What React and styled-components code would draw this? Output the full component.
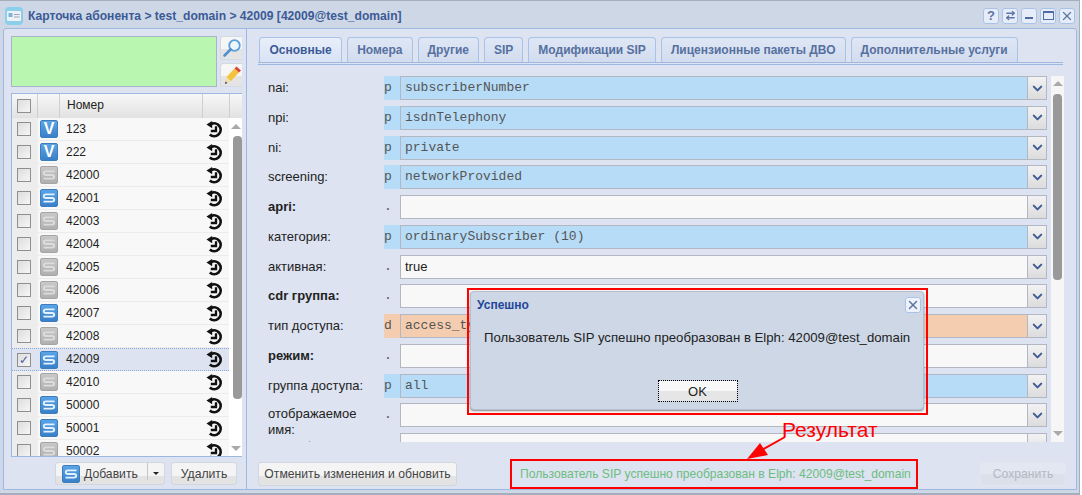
import React from "react";
import styled, { createGlobalStyle } from "styled-components";
import { ChevronDown, X, ArrowRightLeft } from "lucide-react";

const rows = [
  ["123", "V", true],
  ["222", "V", true],
  ["42000", "S", false],
  ["42001", "S", true],
  ["42003", "S", false],
  ["42004", "S", false],
  ["42005", "S", false],
  ["42006", "S", false],
  ["42007", "S", true],
  ["42008", "S", false],
  ["42009", "S", true, true],
  ["42010", "S", false],
  ["50000", "S", true],
  ["50001", "S", true],
  ["50002", "S", false],
];

const tabs = [
  "Основные",
  "Номера",
  "Другие",
  "SIP",
  "Модификации SIP",
  "Лицензионные пакеты ДВО",
  "Дополнительные услуги",
];

const fields = [
  { label: "nai:", mark: "p", value: "subscriberNumber", kind: "blue" },
  { label: "npi:", mark: "p", value: "isdnTelephony", kind: "blue" },
  { label: "ni:", mark: "p", value: "private", kind: "blue" },
  { label: "screening:", mark: "p", value: "networkProvided", kind: "blue" },
  { label: "apri:", mark: ".", value: "", bold: true },
  { label: "категория:", mark: "p", value: "ordinarySubscriber (10)", kind: "blue" },
  { label: "активная:", mark: ".", value: "true", kind: "plain" },
  { label: "cdr группа:", mark: ".", value: "", bold: true },
  { label: "тип доступа:", mark: "d", value: "access_type", kind: "orange" },
  { label: "режим:", mark: ".", value: "", bold: true },
  { label: "группа доступа:", mark: "p", value: "all", kind: "blue" },
  { label: "отображаемое имя:", mark: ".", value: "", top: 3 },
  { label: "support", mark: ".", value: "", top: 5 },
];

const markColors = { blue: "#b6dcf8", orange: "#f4cdb0" };

function RestoreIcon() {
  return (
    <svg width="17" height="17" viewBox="0 0 16 16" fill="none">
      <path d="M4.5 3.2 A6 6 0 1 1 3.6 12.6" stroke="#111" strokeWidth="2.6" />
      <polygon points="0.4,3.4 5.8,0 5.8,6.8" fill="#111" />
      <path d="M4.5 9.4 H9.4 V5" stroke="#111" strokeWidth="2.2" />
    </svg>
  );
}

function SBadge({ color }) {
  return (
    <svg width="14" height="14" viewBox="0 0 14 14" fill="none">
      <path
        d="M12.5 3.4 H4 Q1.8 3.4 1.8 5.2 Q1.8 7 4 7 H10 Q12.2 7 12.2 8.8 Q12.2 10.6 10 10.6 H1.5"
        stroke={color}
        strokeWidth="1.9"
      />
    </svg>
  );
}

function TypeIcon({ letter, active, small }) {
  return (
    <TypeBadge $active={active} $small={small}>
      {letter === "S" ? <SBadge color={active ? "#e4f2ff" : "#dcdcdc"} /> : letter}
    </TypeBadge>
  );
}

export default function App() {
  return (
    <Page>
      <GlobalStyle />
      <Title>
        <CardIcon>
          <svg width="14" height="10" viewBox="0 0 14 10">
            <rect width="14" height="10" rx="1" fill="#eef2f6" />
            <rect x="1.5" y="2" width="4" height="4" fill="#7fb2e0" />
            <rect x="7" y="3" width="5.5" height="1" fill="#9aa5b2" />
            <rect x="7" y="5.5" width="5.5" height="1" fill="#9aa5b2" />
          </svg>
        </CardIcon>
        <TitleText>Карточка абонента &gt; test_domain &gt; 42009 [42009@test_domain]</TitleText>
        <WindowTools>
          <ToolButton>?</ToolButton>
          <ToolButton><ArrowRightLeft size={11} strokeWidth={3} /></ToolButton>
          <ToolButton><MinimizeBar /></ToolButton>
          <ToolButton><MaximizeBox /></ToolButton>
          <ToolButton><X size={14} strokeWidth={2.2} /></ToolButton>
        </WindowTools>
      </Title>
      <Frame>
        <LeftPane>
          <SearchBlock>
            <GreenBox />
            <SideTools>
              <SideButton>
                <svg width="20" height="20" viewBox="0 0 20 20" fill="none">
                  <circle cx="12.5" cy="7.5" r="5.3" fill="#eef6fd" stroke="#5f9fd8" strokeWidth="1.8" />
                  <line x1="8.5" y1="11.5" x2="2.5" y2="17.5" stroke="#4f8fcb" strokeWidth="2.6" strokeLinecap="round" />
                </svg>
              </SideButton>
              <SideButton>
                <svg width="20" height="20" viewBox="0 0 20 20">
                  <polygon points="3,19 4.5,12 9,16" fill="#f3dcae" />
                  <polygon points="4.5,12 12.5,3.5 17,7.5 9,16" fill="#f5c33b" />
                  <polygon points="12.5,3.5 14.5,1.5 19,5.5 17,7.5" fill="#d9443c" />
                  <polygon points="3,19 3.6,16.4 5.4,18" fill="#333" />
                </svg>
              </SideButton>
            </SideTools>
          </SearchBlock>
          <Table>
            <TableHead>
              <CheckCell $head><Check /></CheckCell>
              <IconCell />
              <NumberHead>Номер</NumberHead>
              <HeadEnd />
              <HeadEnd $narrow />
            </TableHead>
            <TableBody>
              <RowList>
                {rows.map(([number, letter, active, selected]) => (
                  <Row key={number} $selected={selected}>
                    <CheckCell $selected={selected}>
                      <Check>{selected && "✓"}</Check>
                    </CheckCell>
                    <TypeIcon letter={letter} active={active} />
                    <RowNumber>{number}</RowNumber>
                    <RestoreIcon />
                  </Row>
                ))}
              </RowList>
              <ListScroll>
                <ArrowUp />
                <ListThumb />
                <ArrowDown />
              </ListScroll>
            </TableBody>
          </Table>
          <LeftActions>
            <AddButton>
              <TypeIcon letter="S" active small />
              Добавить
              <SplitArrow />
            </AddButton>
            <SmallButton>Удалить</SmallButton>
          </LeftActions>
        </LeftPane>
        <RightPane>
          <TabBar>
            {tabs.map((tab, i) => (
              <Tab key={tab} $active={i === 0}>{tab}</Tab>
            ))}
          </TabBar>
          <FormArea>
            <FormRows>
              {fields.map((f) => (
                <FormRow key={f.label}>
                  <Label $bold={f.bold} $top={f.top}>{f.label}</Label>
                  <Mark $kind={f.kind}>{f.mark}</Mark>
                  <Field $kind={f.kind}>{f.value}</Field>
                  <FieldArrow><ChevronDown size={15} strokeWidth={3.2} color="#3f5a94" /></FieldArrow>
                </FormRow>
              ))}
            </FormRows>
            <FormScroll>
              <ArrowUp />
              <FormThumb />
              <ArrowDown />
            </FormScroll>
          </FormArea>
          <RightActions>
            <ResetButton>Отменить изменения и обновить</ResetButton>
            <Status>Пользователь SIP успешно преобразован в Elph: 42009@test_domain</Status>
            <SaveButton>Сохранить</SaveButton>
          </RightActions>
        </RightPane>
      </Frame>
      <DialogOutline>
        <Dialog>
          <DialogHead>
            Успешно
            <DialogClose><X size={14} strokeWidth={2.5} /></DialogClose>
          </DialogHead>
          <DialogText>Пользователь SIP успешно преобразован в Elph: 42009@test_domain</DialogText>
          <OkButton>OK</OkButton>
        </Dialog>
      </DialogOutline>
      <Note>Результат</Note>
      <NoteArrow width="50" height="30" viewBox="0 0 50 30">
        <line x1="39" y1="6" x2="16" y2="19" stroke="#f00" strokeWidth="2" />
        <polygon points="1,28 14,12 22,24" fill="#f00" />
      </NoteArrow>
    </Page>
  );
}

const GlobalStyle = createGlobalStyle`
  html, body {
    margin: 0;
    padding: 0;
    background: #fff;
  }
  * {
    box-sizing: border-box;
  }
`;

const Page = styled.div`
  position: relative;
  width: 1080px;
  height: 495px;
  padding: 2px 2px 3px 3px;
  overflow: hidden;
  background: #cdd7e6;
  border-top: 1px solid #a6aebd;
  border-right: 1px solid #a6aebd;
  border-bottom: 2px solid #a6aebd;
  font-family: "Liberation Sans", Arial, sans-serif;
  font-size: 12px;
  color: #222;
`;

const Title = styled.div`
  display: flex;
  align-items: center;
  height: 25px;
  padding: 0 2px;
`;

const CardIcon = styled.div`
  display: flex;
  align-items: center;
  justify-content: center;
  width: 18px;
  height: 18px;
  margin-right: 5px;
  border-radius: 4px;
  background: #8ccfea;
`;

const TitleText = styled.div`
  flex: 1;
  font-size: 12.1px;
  font-weight: bold;
  color: #3c5a96;
`;

const WindowTools = styled.div`
  display: flex;
  gap: 3px;
`;

const ToolButton = styled.div`
  display: flex;
  align-items: center;
  justify-content: center;
  width: 16px;
  height: 16px;
  border: 1px solid #a9c3e8;
  border-radius: 3px;
  background: #e6edf8;
  font-size: 13px;
  font-weight: bold;
  color: #5d74a4;
`;

const MinimizeBar = styled.div`
  width: 8px;
  height: 2px;
  margin-top: 4px;
  background: #4f6ba3;
`;

const MaximizeBox = styled.div`
  width: 11px;
  height: 9px;
  border: 1px solid #4f6ba3;
  border-top-width: 2px;
`;

const Frame = styled.div`
  display: flex;
  height: 462px;
  border: 1px solid #9db9e2;
  border-radius: 3px 3px 0 0;
  background: #dde3f0;
`;

const LeftPane = styled.div`
  display: flex;
  flex-direction: column;
  flex: none;
  width: 243px;
  padding: 7px 4px 0 7px;
  border-right: 1px solid #9db9e2;
`;

const SearchBlock = styled.div`
  display: flex;
  gap: 3px;
`;

const GreenBox = styled.div`
  width: 206px;
  height: 51px;
  border: 1px solid #a8b4cc;
  background: #b9f6b0;
`;

const SideTools = styled.div`
  display: flex;
  flex-direction: column;
  gap: 3px;
`;

const SideButton = styled.div`
  display: flex;
  align-items: center;
  justify-content: center;
  width: 22px;
  height: 24px;
  border: 1px solid #d4d9e2;
  border-right: 0;
  border-radius: 3px 0 0 3px;
  background: linear-gradient(#f6f6f6 55%, #e4e4e4 55%);
`;

const Table = styled.div`
  width: 231px;
  height: 364px;
  margin-top: 6px;
  border: 1px solid #9db9e2;
  border-right: 0;
  background: #fff;
`;

const TableHead = styled.div`
  display: flex;
  align-items: center;
  height: 24px;
  background: linear-gradient(#f7f7f7, #e2e2e2);
`;

const CheckCell = styled.div`
  display: flex;
  flex: none;
  align-items: center;
  width: 26px;
  height: 100%;
  padding-left: 5px;
  border-right: ${(p) => (p.$head ? "1px solid #cfcfcf" : "0")};
  background: ${(p) => (p.$head || p.$selected ? "transparent" : "#ededed")};
`;

const IconCell = styled.div`
  width: 22px;
  height: 100%;
  border-right: 1px solid #cfcfcf;
`;

const NumberHead = styled.div`
  flex: 1;
  padding: 0 0 2px 7px;
`;

const HeadEnd = styled.div`
  width: ${(p) => (p.$narrow ? "13px" : "27px")};
  height: 100%;
  border-left: 1px solid #cfcfcf;
`;

const Check = styled.div`
  display: flex;
  align-items: center;
  justify-content: center;
  width: 14px;
  height: 14px;
  border: 1px solid #8f8f8f;
  background: linear-gradient(135deg, #ddd, #f6f6f6);
  color: #4a5fa5;
  font-size: 12px;
  line-height: 1;
`;

const TableBody = styled.div`
  display: flex;
  height: 338px;
  overflow: hidden;
`;

const RowList = styled.div`
  flex: 1;
  overflow: hidden;
`;

const Row = styled.div`
  display: flex;
  align-items: center;
  height: 23px;
  padding-right: 6px;
  background: ${(p) => (p.$selected ? "#dde3f0" : "#f8f8f8")};
  border-bottom: 1px ${(p) => (p.$selected ? "dotted #8fa8dc" : "solid #ececec")};
  border-top: ${(p) => (p.$selected ? "1px dotted #8fa8dc" : "0")};
`;

const TypeBadge = styled.div`
  display: flex;
  flex: none;
  align-items: center;
  justify-content: center;
  width: 18px;
  height: 18px;
  margin: 0 ${(p) => (p.$small ? "4px" : "0")} 0 ${(p) => (p.$small ? "0" : "2px")};
  border-radius: 2px;
  border: 1px solid ${(p) => (p.$active ? "#3c7dc0" : "#a5a5a5")};
  background: ${(p) => (p.$active ? "linear-gradient(#5aa4e6, #3a80c8)" : "linear-gradient(#c8c8c8, #b0b0b0)")};
  color: ${(p) => (p.$active ? "#fff" : "#e8e8e8")};
  font-size: 16px;
  font-weight: bold;
`;

const RowNumber = styled.div`
  flex: 1;
  padding: 0 0 1px 8px;
`;

const ListScroll = styled.div`
  display: flex;
  flex: none;
  flex-direction: column;
  align-items: center;
  width: 13px;
  padding-top: 6px;
`;

const ArrowUp = styled.div`
  flex: none;
  width: 0;
  height: 0;
  border: 5px solid transparent;
  border-top: 0;
  border-bottom: 5px solid #aaa;
`;

const ArrowDown = styled(ArrowUp)`
  border: 5px solid transparent;
  border-bottom: 0;
  border-top: 5px solid #aaa;
`;

const ListThumb = styled.div`
  flex: none;
  align-self: flex-end;
  width: 9px;
  height: 263px;
  margin: 7px 0 47px;
  border-radius: 4px;
  background: #999;
`;

const LeftActions = styled.div`
  display: flex;
  justify-content: flex-end;
  gap: 6px;
  padding: 5px 5px 0 0;
`;

const Button = styled.div`
  display: flex;
  flex: none;
  align-items: center;
  justify-content: center;
  height: 24px;
  border: 1px solid #d2d6de;
  border-radius: 3px;
  background: linear-gradient(#f4f4f4 60%, #e3e3e3 60%);
  font-size: 12.2px;
  color: #444;
  white-space: nowrap;
`;

const SmallButton = styled(Button)`
  width: 66px;
  height: 23px;
`;

const AddButton = styled(SmallButton)`
  justify-content: flex-start;
  width: 110px;
  padding-left: 6px;
`;

const ResetButton = styled(Button)`
  width: 199px;
`;

const SplitArrow = styled.div`
  position: relative;
  width: 0;
  height: 0;
  margin-left: 15px;
  border: 3px solid transparent;
  border-bottom: 0;
  border-top: 3px solid #222;

  &::before {
    content: "";
    position: absolute;
    top: -12px;
    left: -9px;
    width: 1px;
    height: 17px;
    background: #c6c6c6;
  }
`;

const RightPane = styled.div`
  display: flex;
  flex-direction: column;
  flex: 1;
  min-width: 0;
  padding: 8px 0 0 11px;
`;

const TabBar = styled.div`
  display: flex;
  gap: 5px;
  height: 28px;
  margin-right: 13px;
  padding-left: 1px;
  border-bottom: 3px double #9db9e2;
`;

const Tab = styled.div`
  display: flex;
  align-items: center;
  height: 25px;
  padding: 0 ${(p) => (p.$active ? "9.5px" : "9px")};
  border: 1px solid #a9c3e8;
  border-bottom: 0;
  border-radius: 4px 4px 0 0;
  background: ${(p) => (p.$active ? "linear-gradient(#e9eff9, #d8e3f5)" : "linear-gradient(#dfe7f5, #d2dcee)")};
  font-weight: bold;
  color: ${(p) => (p.$active ? "#3c5a96" : "#56709f")};
`;

const FormArea = styled.div`
  display: flex;
  height: 367px;
  margin-top: 11px;
  overflow: hidden;
`;

const FormRows = styled.div`
  display: flex;
  flex: none;
  flex-direction: column;
  gap: 5.75px;
  width: 789px;
  padding-left: 10px;
`;

const FormRow = styled.div`
  display: flex;
  flex: none;
  align-items: center;
  height: 24px;
`;

const Label = styled.div`
  flex: none;
  align-self: ${(p) => (p.$top ? "flex-start" : "center")};
  width: 116px;
  margin-top: ${(p) => p.$top || 0}px;
  padding-right: 8px;
  font-size: 13px;
  line-height: 16px;
  font-weight: ${(p) => (p.$bold ? "bold" : "normal")};
`;

const Mark = styled.div`
  flex: none;
  width: 16px;
  height: 24px;
  background: ${(p) => markColors[p.$kind] || "transparent"};
  font-family: "Liberation Mono", monospace;
  font-size: 13px;
  line-height: 23px;
  color: #555;
`;

const Field = styled.div`
  flex: 1;
  height: 24px;
  padding-left: 4px;
  border: 1px solid #b3b7c4;
  background: ${(p) => markColors[p.$kind] || "#f8f8f8"};
  font-family: ${(p) => (p.$kind === "plain" ? '"Liberation Sans", sans-serif' : '"Liberation Mono", monospace')};
  font-size: 13px;
  line-height: 22px;
  color: ${(p) => (p.$kind === "plain" ? "#222" : "#555")};
`;

const FieldArrow = styled.div`
  display: flex;
  flex: none;
  align-items: center;
  justify-content: center;
  width: 19px;
  height: 24px;
  border: 1px solid #b3b7c4;
  border-left: 0;
  background: linear-gradient(#f2f2f2, #dcdcdc);
`;

const FormScroll = styled.div`
  display: flex;
  flex: none;
  flex-direction: column;
  align-items: center;
  width: 13px;
  margin-left: 4px;
  padding-top: 5px;
  background: #f6f6f6;
`;

const FormThumb = styled.div`
  flex: none;
  width: 9px;
  height: 186px;
  margin: 8px 0 151px;
  border-radius: 4px;
  background: #999;
`;

const RightActions = styled.div`
  display: flex;
  align-items: center;
  height: 30px;
  margin-top: 17px;
`;

const Status = styled.div`
  flex: none;
  width: 408px;
  height: 30px;
  margin-left: 53px;
  padding-left: 8px;
  border: 2px solid #f00;
  font-size: 12.1px;
  line-height: 26px;
  color: #6cbd80;
  white-space: nowrap;
`;

const SaveButton = styled(Button)`
  width: 86px;
  margin-left: 62px;
  border-color: #e2e6ee;
  background: linear-gradient(#e2e7f1 50%, #dbe0ea 50%);
  color: #b3b8c2;
`;

const DialogOutline = styled.div`
  position: absolute;
  top: 287px;
  left: 467px;
  width: 461px;
  height: 127px;
  padding: 1px 2px 3px 1px;
  border: 2px solid #f00;
`;

const Dialog = styled.div`
  display: flex;
  flex-direction: column;
  height: 100%;
  padding: 0 2px 0 3px;
  border: 1px solid #b5bfd0;
  border-radius: 4px;
  background: #cdd7e6;
  box-shadow: 0 1px 2px #888;
`;

const DialogHead = styled.div`
  display: flex;
  flex: none;
  align-items: center;
  justify-content: space-between;
  height: 26px;
  padding-left: 3px;
  font-weight: bold;
  color: #24469a;
`;

const DialogClose = styled(ToolButton)`
  background: #eef3fb;
`;

const DialogText = styled.div`
  margin-top: 12px;
  padding-left: 10px;
  font-size: 13.2px;
  line-height: 15px;
  white-space: nowrap;
`;

const OkButton = styled.div`
  display: flex;
  flex: none;
  align-items: center;
  justify-content: center;
  align-self: center;
  width: 78px;
  height: 20px;
  margin-top: 36px;
  outline: 1px dotted #000;
  background: linear-gradient(#f8f8f8 50%, #e6e6e6 50%);
  font-size: 13px;
`;

const Note = styled.div`
  position: absolute;
  top: 416px;
  left: 782px;
  font-size: 21px;
  color: #f00;
  line-height: 26px;
`;

const NoteArrow = styled.svg`
  position: absolute;
  top: 430px;
  left: 746px;
`;
